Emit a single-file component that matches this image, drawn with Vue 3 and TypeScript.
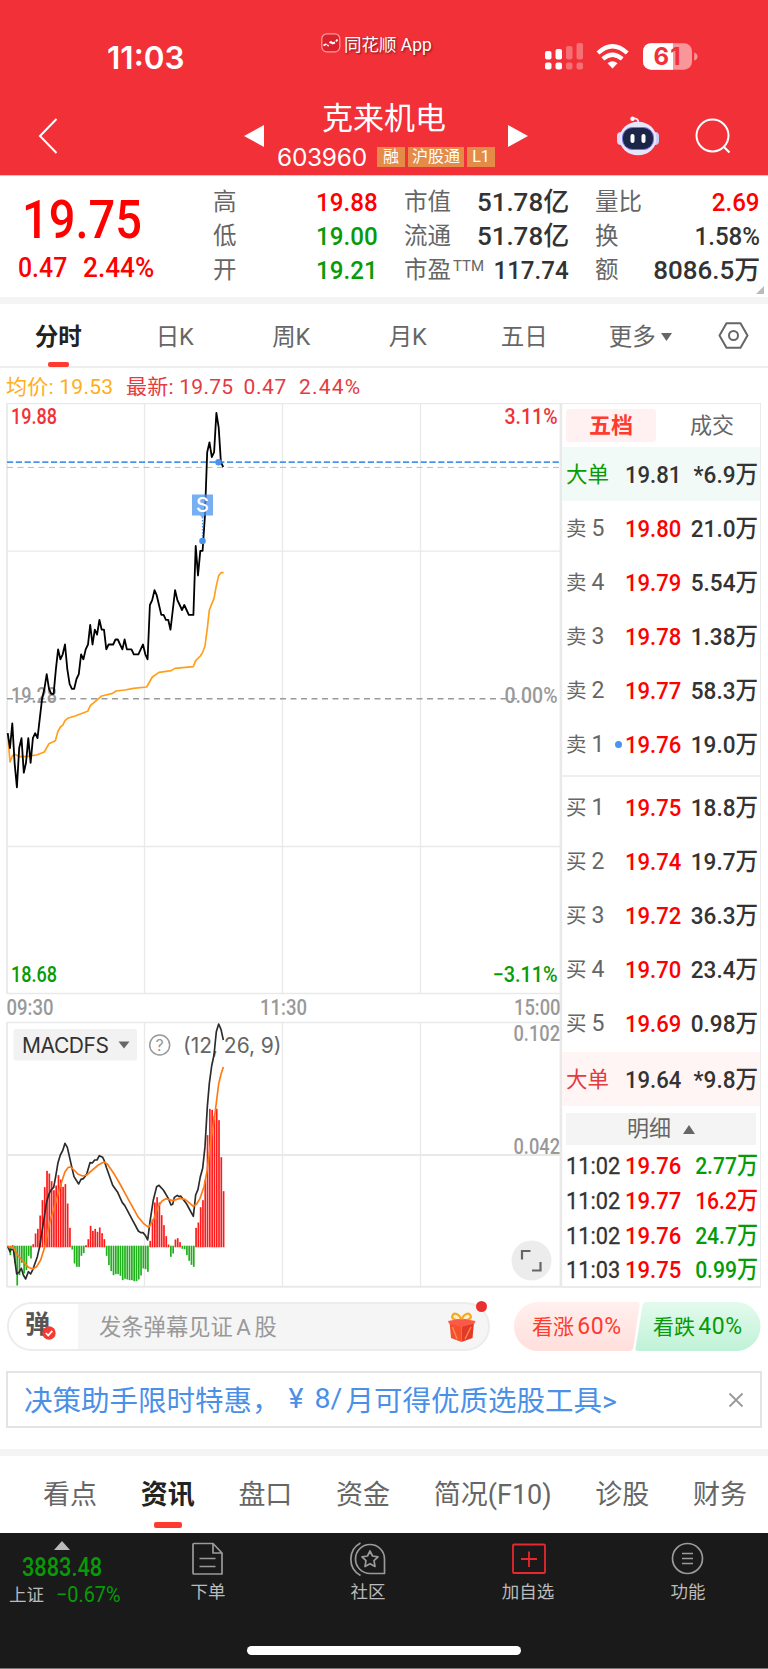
<script setup lang="ts">
interface Quote { label: string; sup?: string; value: string; tone: string; unit?: boolean }
interface Level { label: string; price: string; volume: string; dot?: boolean }
interface AxisLabel { text: string; x: number; y: number; width: number; tone: string }

const quoteColumns: Quote[][] = [
  [
    { label: '高', value: '19.88', tone: 'up' },
    { label: '低', value: '19.00', tone: 'down' },
    { label: '开', value: '19.21', tone: 'down' },
  ],
  [
    { label: '市值', value: '51.78亿', tone: 'flat', unit: true },
    { label: '流通', value: '51.78亿', tone: 'flat', unit: true },
    { label: '市盈', sup: 'TTM', value: '117.74', tone: 'flat' },
  ],
  [
    { label: '量比', value: '2.69', tone: 'up' },
    { label: '换', value: '1.58%', tone: 'flat' },
    { label: '额', value: '8086.5万', tone: 'flat', unit: true },
  ],
]

const periods = ['分时', '日K', '周K', '月K', '五日']

const axisLabels: AxisLabel[] = [
  { text: '19.88', x: 11, y: 423.5, width: 46, tone: 'up' },
  { text: '3.11%', x: 504.5, y: 423.5, width: 53, tone: 'up' },
  { text: '19.28', x: 11, y: 702.5, width: 46, tone: 'mid' },
  { text: '0.00%', x: 504.5, y: 702.5, width: 53, tone: 'mid' },
  { text: '18.68', x: 11, y: 981.5, width: 46, tone: 'down' },
  { text: '−3.11%', x: 492.5, y: 981.5, width: 65, tone: 'down' },
  { text: '09:30', x: 6.5, y: 1014.5, width: 47, tone: 'time' },
  { text: '11:30', x: 260, y: 1014.5, width: 47, tone: 'time' },
  { text: '15:00', x: 514, y: 1014.5, width: 46.5, tone: 'time' },
  { text: '0.102', x: 513.5, y: 1040.5, width: 46.5, tone: 'time' },
  { text: '0.042', x: 513.5, y: 1153.5, width: 46.5, tone: 'time' },
]

const sells: Level[] = [
  { label: '5', price: '19.80', volume: '21.0万' },
  { label: '4', price: '19.79', volume: '5.54万' },
  { label: '3', price: '19.78', volume: '1.38万' },
  { label: '2', price: '19.77', volume: '58.3万' },
  { label: '1', price: '19.76', volume: '19.0万', dot: true },
]
const buys: Level[] = [
  { label: '1', price: '19.75', volume: '18.8万' },
  { label: '2', price: '19.74', volume: '19.7万' },
  { label: '3', price: '19.72', volume: '36.3万' },
  { label: '4', price: '19.70', volume: '23.4万' },
  { label: '5', price: '19.69', volume: '0.98万' },
]
const deals = [
  { time: '11:02', price: '19.76', volume: '2.77万', tone: 'down' },
  { time: '11:02', price: '19.77', volume: '16.2万', tone: 'up' },
  { time: '11:02', price: '19.76', volume: '24.7万', tone: 'down' },
  { time: '11:03', price: '19.75', volume: '0.99万', tone: 'down' },
]
const sections = ['看点', '资讯', '盘口', '资金', '简况(F10)', '诊股', '财务']

/* Minute prices, in cents above the previous close of 19.28 */
const prices = [
  -7, -10, -5, -13, -18, -10, -8, -15, -13, -8, -13, -8, -7, -8, -4, 0, 2, 5, 2, 1,
  1, 6, 10, 8, 9, 11, 6, 3, 2, 2, 4, 5, 9, 8, 10, 11, 15, 11, 14, 13,
  16, 14, 14, 10, 11, 11, 11, 12, 12, 11, 10, 12, 10, 10, 10, 9, 9, 9, 10, 11,
  9, 8, 19, 20, 22, 21, 19, 17, 17, 16, 16, 14, 18, 22, 20, 19, 18, 19, 18, 17,
  17, 17, 31, 25, 30, 30, 37, 50, 52, 49, 50, 58, 55, 48, 47,
]
const minuteX = (i: number): number => 7.7 + i * 2.293
const priceLine = prices.map((p, i) => `${minuteX(i).toFixed(1)},${(698.7 - p * 4.93).toFixed(1)}`).join(' ')

/* MACD histogram, in thirds of a pixel, positive upwards */
const histogram = [
  0, -26, 4, -49, -117, -86, -49, -81, -71, -28, -36, 7, 39, 53, 93, 139, 178, 227, 219, 196,
  169, 183, 214, 201, 179, 187, 129, 56, -9, -51, -61, -61, -28, -20, 4, 22, 62, 47, 53, 44,
  57, 40, 22, -28, -56, -74, -86, -83, -83, -88, -101, -97, -99, -101, -101, -104, -104, -99, -87, -66,
  -68, -76, 17, 81, 132, 148, 132, 94, 64, 31, 6, -31, -21, 21, 25, 13, -7, -8, -26, -43,
  -55, -61, 56, 72, 118, 139, 199, 334, 413, 410, 391, 413, 379, 268, 166,
]
const bars = histogram.map((h, i) => ({
  x: minuteX(i) - 0.5,
  y: h > 0 ? 1246.5 - h / 3 : 1245.7,
  h: Math.abs(h) / 3 + 0.8,
  up: h > 0,
}))

const averageLine = '23,1000 30,1086 37,1068 44,1063 60,1070 80,1070 95,1067 110,1065 133,1056 147,1031 166,1022 174,994 181,981 188,976 195,962 203,955 225,948 263,934 271,917 305,888 338,880 348,873 375,870 400,865 440,861 457,831 477,817 514,812 525,805 580,800 587,782 601,768 608,757 615,738 622,685 628,630 642,595 649,557 656,527 663,518 671,518'
const difLine = '23,859 30,875 33,868 40,868 50,942 57,937 64,925 70,945 77,957 85,935 92,942 98,930 112,890 119,860 126,815 133,770 140,725 147,702 153,690 161,682 167,650 174,608 181,585 188,572 195,550 202,562 215,620 222,650 236,672 243,658 250,656 260,643 270,608 277,609 284,600 291,600 298,587 308,592 312,600 319,622 338,676 353,697 367,728 374,736 400,785 415,813 422,818 429,818 436,826 443,840 450,785 460,720 470,680 477,676 490,690 505,715 513,735 518,733 523,712 532,706 537,710 542,708 560,732 580,769 587,705 594,688 601,650 608,625 615,560 622,440 628,370 635,318 642,285 649,215 656,192 663,208 670,240'
const deaLine = '23,860 40,862 50,882 70,905 85,922 98,927 110,920 122,900 133,865 150,785 165,735 180,680 195,635 205,622 212,621 222,630 235,643 248,648 260,645 275,632 295,615 312,606 322,612 340,638 360,672 385,718 415,772 430,790 446,802 460,780 475,738 487,722 498,716 518,722 540,715 555,718 570,730 580,739 590,732 600,715 612,680 622,628 632,545 645,460 656,372 663,343 670,321'
</script>

<template>
  <div class="page">
    <header class="top">
      <div class="status">
        <span class="clock">11:03</span>
        <span class="brand">
          <svg width="20" height="20" viewBox="0 0 20 20">
            <rect x="0.8" y="0.8" width="18" height="18" rx="5" fill="#d9222b" stroke="#ff9a9e" stroke-width="1.2" />
            <path d="M2.5 12.5l3-1.5M6.500 13l1-1M8.500 10l1.500-1 1.500 1.500 2.500-1M15 8.500l1.500-2" fill="none" stroke="#fff" stroke-width="1.9" />
          </svg>
          <span>同花顺 App</span>
        </span>
        <svg class="signals" width="153" height="28" viewBox="545 43 153 28">
          <g fill="#fff">
            <rect x="545" y="51" width="6.500" height="8.500" rx="2" />
            <rect x="555.5" y="49" width="6.500" height="10.500" rx="2" />
            <rect x="545" y="62.500" width="6.500" height="7" rx="2" />
            <rect x="555.5" y="62.500" width="6.500" height="7" rx="2" />
            <g opacity=".3">
              <rect x="566" y="46" width="6.500" height="13.500" rx="2" />
              <rect x="576.5" y="43" width="6.500" height="16.500" rx="2" />
              <rect x="566" y="62.500" width="6.500" height="7" rx="2" />
              <rect x="576.5" y="62.500" width="6.500" height="7" rx="2" />
            </g>
            <path d="M612.500 68.500L607.500 63.200Q612.500 59.500 617.500 63.200Z" />
            <path d="M602.800 58.800Q612.500 50.500 622.200 58.800M598 53Q612.500 39.500 627.200 53" fill="none" stroke="#fff" stroke-width="4.300" />
            <rect x="643" y="43.200" width="49" height="26.500" rx="8" fill="#f9969a" />
            <path d="M651 43.200H673V69.700H651A8 8 0 0 1 643 61.700V51.200A8 8 0 0 1 651 43.200Z" />
            <path d="M694.200 52.500Q697.500 53.500 697.500 56.500T694.200 60.500Z" fill="#f9969a" />
          </g>
          <text x="653.500" y="64.500" textLength="27" class="battery">61</text>
        </svg>
      </div>
      <div class="titlebar">
        <svg class="back" width="20" height="36" viewBox="0 0 20 36"><path d="M18.500 1L2 18L18.500 35" fill="none" stroke="#fff" stroke-width="2" /></svg>
        <svg class="prev" width="20" height="22" viewBox="0 0 20 22"><path d="M0 11L20 0V22Z" fill="#fff" /></svg>
        <div class="name">
          <h1>克来机电</h1>
          <div class="code"><span class="num">603960</span><i>融</i><i>沪股通</i><i>L1</i></div>
        </div>
        <svg class="next" width="20" height="22" viewBox="0 0 20 22"><path d="M20 11L0 0V22Z" fill="#fff" /></svg>
        <svg class="robot" width="42" height="40" viewBox="0 0 42 40">
          <path d="M21 7C22 3.500 19.500 2 15 2.500" fill="none" stroke="#e9e8fb" stroke-width="1.800" />
          <circle cx="15.500" cy="2.800" r="2.200" fill="#fff" />
          <rect x="0" y="16" width="8" height="13" rx="4" fill="#d9d9f6" />
          <rect x="34" y="16" width="8" height="13" rx="4" fill="#c9cbf4" />
          <ellipse cx="21" cy="22.500" rx="18.500" ry="16.800" fill="#e6e6fa" />
          <rect x="5.500" y="11.500" width="31" height="22" rx="10" fill="#1b2547" stroke="#7b6fe8" stroke-width="1" />
          <rect x="13.500" y="18" width="4" height="9" rx="2" fill="#fff" />
          <rect x="24.500" y="18" width="4" height="9" rx="2" fill="#fff" />
        </svg>
        <svg class="search" width="36" height="36" viewBox="0 0 36 36"><circle cx="17.500" cy="17.500" r="16" fill="none" stroke="#fff" stroke-width="2" /><path d="M28.500 28.500L34.500 34.500" stroke="#fff" stroke-width="2.200" /></svg>
      </div>
    </header>

    <section class="quote">
      <div class="last">
        <strong>19.75</strong>
        <div><span>0.47</span><span class="pct">2.44%</span></div>
      </div>
      <div v-for="(col, c) in quoteColumns" :key="c" class="stats">
        <div v-for="q in col" :key="q.label">
          <label>{{ q.label }}<sup v-if="q.sup">{{ q.sup }}</sup></label>
          <b :class="[q.tone, { unit: q.unit }]">{{ q.value }}</b>
        </div>
      </div>
      <i class="corner"></i>
    </section>

    <nav class="periods">
      <span v-for="(p, i) in periods" :key="p" :class="{ on: i === 0 }">{{ p }}</span>
      <span class="more">更多<svg width="12" height="8" viewBox="0 0 12 8"><path d="M0 0H11L5.500 8Z" fill="#666" /></svg></span>
      <svg class="hex" width="31" height="27" viewBox="0 0 31 27"><path d="M8.500 1.200H22.500L29.500 13.500L22.500 25.800H8.500L1.500 13.500Z" fill="none" stroke="#666" stroke-width="2" stroke-linejoin="round" /><circle cx="15.500" cy="13.500" r="4.500" fill="none" stroke="#666" stroke-width="2" /></svg>
    </nav>

    <div class="legend">
      <span class="avg">均价: 19.53</span><span class="latest">最新: 19.75</span><span class="diff">0.47</span><span class="rate">2.44%</span>
    </div>

    <main class="market">
      <svg class="chart" width="562" height="885" viewBox="0 403 562 885">
        <g stroke="#e9e9e9" stroke-width="1.300" fill="none">
          <path d="M7 403.700H560M7 551.200H560M7 846.500H560M7 993.500H560M7 1022.500H560" />
          <path d="M144.500 403V993M282.500 403V993M420.500 403V993M144.500 1022V1286M282.500 1022V1286M420.500 1022V1286" />
          <path d="M7 403V993.500M7 1022V1287" stroke-width="1.800" />
          <path d="M7 1155H560M7 1286.700H562" stroke-width="2" />
          <path d="M560.900 403V1287" stroke-width="2.600" />
        </g>
        <path d="M7 698.700H524" stroke="#9a9a9a" stroke-width="1.500" stroke-dasharray="6 4.500" />
        <path d="M7 467.400H560" stroke="#d8b48c" stroke-width="1" stroke-dasharray="6 4.500" />
        <path d="M7 462.200H560" stroke="#4a94ee" stroke-width="1.700" stroke-dasharray="6.200 2.600" />

        <text v-for="a in axisLabels" :key="a.text" :x="a.x" :y="a.y" :textLength="a.width" lengthAdjust="spacingAndGlyphs" :class="['axis', a.tone]">{{ a.text }}</text>

        <g transform="translate(0 400) scale(.33333)"><polyline :points="averageLine" fill="none" stroke="#ff9f1a" stroke-width="5" stroke-linejoin="round" /></g>
        <polyline :points="priceLine" fill="none" stroke="#000" stroke-width="1.800" stroke-linejoin="round" />
        <path d="M202.500 517V539" stroke="#4a94ee" stroke-width="1.300" stroke-dasharray="1.500 1.500" />
        <path d="M192 494.500H213V515.500H205L202.500 518L200 515.500H192Z" fill="#4a94ee" fill-opacity=".75" />
        <text x="202.500" y="512" text-anchor="middle" class="mark">S</text>
        <circle cx="202.500" cy="541" r="3.300" fill="#4a94ee" />
        <circle cx="218.500" cy="462.200" r="3.300" fill="#4a94ee" />

        <rect x="13.500" y="1029" width="123.500" height="31.500" rx="2" fill="#f2f2f2" />
        <text x="22" y="1052.500" textLength="87" class="indicator dark">MACDFS</text>
        <path d="M118.500 1041.500H129.500L124 1048.500Z" fill="#666" />
        <circle cx="159.700" cy="1045" r="10" fill="none" stroke="#999" stroke-width="1.500" />
        <text x="159.700" y="1051" text-anchor="middle" class="help">?</text>
        <text x="183" y="1052.500" textLength="98.500" class="indicator">(12, 26, 9)</text>

        <rect v-for="(b, i) in bars" :key="i" :x="b.x" :y="b.y" width="1.700" :height="b.h" :fill="b.up ? '#ff1b1b' : '#20b01c'" />
        <g transform="translate(0 960) scale(.33333)" fill="none" stroke-linejoin="round" stroke-width="5">
          <polyline :points="difLine" stroke="#2b2b2b" />
          <polyline :points="deaLine" stroke="#ff7a14" />
        </g>
        <circle cx="531.500" cy="1260.500" r="20" fill="#ececec" />
        <path d="M522 1259.500V1251H530.500M540.500 1262V1270.500H532" fill="none" stroke="#666" stroke-width="2.200" />
      </svg>

      <aside class="book">
        <div class="switch"><span class="on">五档</span><span>成交</span></div>
        <div class="level big sell"><label>大单</label><b>19.81</b><em>*6.9万</em></div>
        <div v-for="l in sells" :key="'s' + l.label" class="level">
          <label>卖 <u>{{ l.label }}</u></label><i v-if="l.dot"></i><b>{{ l.price }}</b><em>{{ l.volume }}</em>
        </div>
        <hr />
        <div v-for="l in buys" :key="'b' + l.label" class="level">
          <label>买 <u>{{ l.label }}</u></label><b>{{ l.price }}</b><em>{{ l.volume }}</em>
        </div>
        <div class="level big buy"><label>大单</label><b>19.64</b><em>*9.8万</em></div>
        <div class="detail">明细<svg width="12" height="9" viewBox="0 0 12 9"><path d="M6 0L12 9H0Z" fill="#666" /></svg></div>
        <div v-for="(d, i) in deals" :key="i" class="deal">
          <time>{{ d.time }}</time><b>{{ d.price }}</b><em :class="d.tone">{{ d.volume }}</em>
        </div>
      </aside>
    </main>

    <section class="talk">
      <div class="pill">
        <div class="tan">弹<svg width="14" height="14" viewBox="0 0 14 14"><circle cx="7" cy="7" r="6.700" fill="#f53a32" /><path d="M3.800 7L6.200 9.500L10.300 4.800" fill="none" stroke="#fff" stroke-width="1.800" /></svg></div>
        <span class="hint">发条弹幕见证 A 股</span>
        <svg class="gift" width="30" height="32" viewBox="0 0 30 32">
          <path d="M14.500 9C8 10 4 7.500 5.500 4.500S12 2 14.500 9ZM14.500 9C21 10 25 7.500 23.500 4.500S17 2 14.500 9Z" fill="#fff0c8" stroke="#f3a928" stroke-width="2.200" />
          <path d="M2.500 11L14.500 15V31L4 27Z" fill="#f5502e" />
          <path d="M27 11L14.500 15V31L25.500 27Z" fill="#e23a26" />
          <path d="M1 10L14.500 7.500L28.500 10L27.500 12.500L14.500 16L2 12.500Z" fill="#fb5a48" />
          <path d="M11.500 8.500Q14.500 5 17.500 8.500Z" fill="#f3a928" />
          <path d="M5.500 16L10 28M24 16L18 28" stroke="#ff8c57" stroke-width="1.300" />
        </svg>
        <i class="unread"></i>
      </div>
      <div class="vote">
        <svg width="247" height="49" viewBox="0 0 247 49">
          <defs>
            <linearGradient id="rise" x1="0" y1="0" x2="0" y2="1"><stop offset="0" stop-color="#fff0ee" /><stop offset="1" stop-color="#ffdfdc" /></linearGradient>
            <linearGradient id="fall" x1="0" y1="0" x2="0" y2="1"><stop offset="0" stop-color="#e3faed" /><stop offset="1" stop-color="#c0f2d7" /></linearGradient>
          </defs>
          <path d="M24.500 0H123Q126 0 125.500 3L119.500 45Q119 49 115 49H24.500A24.500 24.500 0 0 1 24.500 0Z" fill="url(#rise)" />
          <path d="M222 0H133Q129 0 128.500 4L121.500 46Q121 49 124 49H222A24.500 24.500 0 0 0 222 0Z" fill="url(#fall)" />
        </svg>
        <span class="rise">看涨 <u>60%</u></span><span class="fall">看跌 <u>40%</u></span>
      </div>
    </section>

    <section class="promo">
      <span>决策助手限时特惠，</span><span class="yen">¥</span><span class="amount">8/</span><span>月可得优质选股工具&gt;</span>
      <svg width="14" height="14" viewBox="0 0 14 14"><path d="M0.500 0.500L13.500 13.500M13.500 0.500L0.500 13.500" stroke="#999" stroke-width="1.800" /></svg>
    </section>

    <nav class="sections">
      <span v-for="s in sections" :key="s" :class="{ on: s === '资讯' }">{{ s }}</span>
    </nav>

    <footer class="dock">
      <div class="index">
        <svg width="16" height="9" viewBox="0 0 16 9"><path d="M8 0L16 9H0Z" fill="#bbb" /></svg>
        <b>3883.48</b>
        <div><span>上证</span><em>−0.67%</em></div>
      </div>
      <div class="item">
        <svg width="36" height="34" viewBox="0 0 36 34" fill="none" stroke="#9a9a9a" stroke-width="1.700" stroke-linejoin="round"><path d="M4 1.500H23L32 11V32H4Q3 32 3 31V2.500Q3 1.500 4 1.500ZM23 1.500V11H32M9.500 16.500H25.500M9.500 24.500H25.500" /></svg>
        <span>下单</span>
      </div>
      <div class="item">
        <svg width="36" height="34" viewBox="0 0 36 34" fill="none" stroke="#9a9a9a" stroke-width="1.700" stroke-linejoin="round"><path d="M20 2.500A14.500 14.500 0 1 0 20 31.500H34.500V17A14.500 14.500 0 0 0 20 2.500Z" /><path d="M10.500 1A18.500 18.500 0 0 0 10.500 33.500" /><path d="M20 9L22.500 14L28 14.800L24 18.700L25 24.500L20 21.800L15 24.500L16 18.700L12 14.800L17.500 14Z" /></svg>
        <span>社区</span>
      </div>
      <div class="item">
        <svg width="36" height="34" viewBox="0 0 36 34" fill="none" stroke="#e8282d" stroke-width="1.800"><rect x="3" y="2.500" width="32" height="28.500" rx="1" /><path d="M11 17H27M19 9.500V25" /></svg>
        <span>加自选</span>
      </div>
      <div class="item">
        <svg width="36" height="34" viewBox="0 0 36 34" fill="none" stroke="#9a9a9a" stroke-width="1.700"><circle cx="17.500" cy="16.500" r="15" /><path d="M12 11.500H23M12 16.500H23M12 21.500H23" /></svg>
        <span>功能</span>
      </div>
      <i class="home"></i>
    </footer>
  </div>
</template>

<style>
body { background: #fff; }
</style>

<style scoped>
.page { width: 768px; height: 1669px; overflow: hidden; background: #fff; font-family: Roboto, "Noto Sans CJK SC", sans-serif; color: #333; display: flex; flex-direction: column; }
.page * { box-sizing: border-box; white-space: nowrap; }
svg { display: block; flex: none; overflow: visible; }
i, em { font-style: normal; }
u { text-decoration: none; }
.up { color: #ff0000; fill: #ef3338; }
.down { color: #079b07; fill: #079b07; }
.flat { color: #333; }

.top { height: 176px; flex: none; background: #f23038; border-bottom: 1px solid #ffb9bc; color: #fff; }
.status { height: 100px; display: flex; align-items: flex-start; }
.clock { margin: 39px 0 0 107px; width: 214px; font: 600 31.500px/38px Inter, sans-serif; letter-spacing: 0; }
.brand { display: flex; gap: 3px; margin-top: 33px; width: 224px; font-size: 17.500px; line-height: 24px; text-shadow: 1px 1px 2px #7c1014; }
.signals { margin-top: 43px; }
.battery { font: 700 24px Inter, sans-serif; fill: #f23038; }
.titlebar { display: flex; align-items: flex-start; height: 75px; }
.back { margin: 18px 0 0 38px; }
.prev { margin: 25px 0 0 186px; }
.name { width: 244px; display: flex; flex-direction: column; align-items: center; }
h1 { margin: 1px 4px 0 0; font-weight: 400; font-size: 31px; line-height: 36px; }
.code { display: flex; align-items: center; gap: 3px; height: 24px; margin-top: 8px; }
.code .num { font: 400 24.500px/24px Inter, sans-serif; width: 97px; letter-spacing: -0.300px; margin-top: -1px; }
.code i { background: #e38b47; height: 20px; line-height: 20px; font-size: 16px; padding: 0 4px; min-width: 28px; text-align: center; }
.next { margin-top: 25px; }
.robot { margin: 16px 0 0 89px; }
.search { margin: 18px 0 0 36px; }

.quote { height: 128px; flex: none; border-bottom: 7px solid #f4f4f4; position: relative; display: flex; }
.last { width: 213px; color: #ff0000; font-weight: 500; }
.last strong { display: block; font-weight: 500; font-size: 54px; line-height: 60px; margin: 14px 0 0 22px; transform: scaleX(.87); transform-origin: left; }
.last div { display: flex; font-size: 27px; line-height: 32px; margin: 2px 0 0 18px; }
.last span { width: 65px; transform: scaleX(.92); transform-origin: left; }
.last .pct { transform: scaleX(.97); }
.stats { width: 165px; margin-right: 26px; padding-top: 9px; }
.stats + .stats + .stats { margin-right: 0; }
.stats div { display: flex; justify-content: space-between; height: 34px; line-height: 35px; }
.stats label { font-size: 23.500px; color: #666; }
.stats sup { font-size: 15px; line-height: 1; margin-left: 2px; vertical-align: 7px; }
.stats b { font-size: 26.500px; font-weight: 500; transform: scaleX(.91); transform-origin: right; margin-left: -30px; line-height: 34px; }
.stats .unit { transform: scaleX(.98); }
.corner { position: absolute; right: 4px; bottom: 3px; width: 8px; height: 8px; background: #bbb; clip-path: polygon(100% 0, 100% 100%, 0 100%); }

.periods { height: 64px; flex: none; border-bottom: 2px solid #eee; display: grid; grid-template-columns: repeat(6, 116.500px) 1fr; justify-items: center; color: #666; font-size: 23.500px; line-height: 66px; }
.periods span { display: flex; align-items: center; height: 62px; padding-top: 3px; position: relative; }
.periods .on { color: #222; font-weight: 700; }
.periods .on::after { content: ""; position: absolute; left: 50%; bottom: -1px; width: 21px; height: 5px; margin-left: -10.500px; border-radius: 2px; background: #ff3b30; }
.more svg { margin-left: 5px; }
.hex { margin-top: 18px; }
.legend { height: 35px; flex: none; display: flex; padding-left: 6px; font-size: 21px; line-height: 38px; letter-spacing: .25px; color: #e53a3e; }
.avg { color: #ffae1a; width: 120px; }
.latest { width: 117.500px; }
.diff { width: 55.500px; letter-spacing: .6px; }
.rate { letter-spacing: 1.200px; }

.market { display: flex; height: 885px; flex: none; }
.axis { font: 500 21.500px Roboto, sans-serif; }
.mid, .time { fill: #999; }
.mark { font: 500 20px Inter, sans-serif; fill: #fff; }
.indicator { font: 400 21px Inter, sans-serif; fill: #666; }
.dark { fill: #333; }
.help { font: 400 16px Inter, sans-serif; fill: #999; }
.book { width: 199px; border-top: 1px solid #eaeaea; border-right: 1.500px solid #eaeaea; border-bottom: 2px solid #eaeaea; }
.switch { height: 43px; padding: 5px 0 0 4px; display: flex; font-size: 22px; line-height: 33px; color: #666; text-align: center; }
.switch span { width: 90px; height: 33px; }
.switch span + span { margin-left: 11px; }
.switch .on { background: #fff1f1; color: #ff3b30; font-weight: 700; border-radius: 3px; }
.level, .deal { height: 54px; line-height: 55px; display: flex; position: relative; padding: 0 2px 0 4px; font-size: 24.500px; }
.level label { width: 59px; font-size: 20.500px; color: #666; }
.level u { font-size: 23px; }
.level b, .deal b { width: 60px; font-weight: 500; color: #ff0000; transform: scaleX(.9); transform-origin: left; }
.level em, .deal em { flex: 1; font-weight: 500; text-align: right; transform: scaleX(.92); transform-origin: right; margin-left: -20px; }
.deal em { transform: scaleX(.86); }
.level i { position: absolute; left: 53px; top: 24px; width: 7px; height: 7px; border-radius: 50%; background: #4a94ee; }
.big b { color: #333; }
.sell { background: #f1faf6; }
.buy { background: #fff5f5; margin-top: 2px; }
.level.big label { font-size: 21.500px; }
.sell label { color: #079b07; }
.buy label { color: #e53a3e; }
hr { border: 0; border-top: 2px solid #eee; height: 9px; margin: 4px 0 -4px; }
.detail { height: 32px; margin: 7px 4px 4px; background: #f4f4f4; color: #666; font-size: 22px; line-height: 32px; display: flex; justify-content: center; align-items: center; gap: 12px; }
.deal { height: 34.800px; line-height: 34px; }
.deal time { width: 59px; font-weight: 400; transform: scaleX(.89); transform-origin: left; -webkit-text-stroke: .3px; }

.talk { height: 49px; flex: none; margin-top: 14px; display: flex; justify-content: space-between; padding: 0 7px; }
.pill { position: relative; width: 483px; height: 49px; display: flex; align-items: center; background: #f5f5f5; border: 2px solid #ececec; border-radius: 25px; }
.tan { width: 69px; height: 45px; background: #fff; border-radius: 23px 0 0 23px; font-weight: 700; font-size: 25px; line-height: 41px; color: #555; padding-left: 16px; position: relative; }
.tan svg { position: absolute; left: 33px; top: 22px; }
.hint { margin: -3px 0 0 21px; width: 348px; font-size: 22.300px; word-spacing: -2px; color: #999; }
.unread { position: absolute; right: 1px; top: -3px; width: 11px; height: 11px; border-radius: 50%; background: #e93030; }
.vote { position: relative; width: 247px; display: flex; font-size: 21px; line-height: 49px; word-spacing: -2px; }
.vote svg { position: absolute; right: 0; top: 0; }
.vote span { position: relative; }
.vote u { font-size: 23px; letter-spacing: .6px; }
.rise { margin-left: 18px; width: 121px; color: #ff3b30; }
.fall { color: #079b07; }

.promo { height: 57px; flex: none; margin: 20px 6px 0; border: 2px solid #e4e4e4; display: flex; align-items: center; padding: 0 0 2px 16px; font-size: 28.500px; color: #4a90e8; }
.yen { width: 26px; margin-left: 8px; }
.amount { width: 31px; }
.promo svg { margin: 2px 17px 0 auto; }

.sections { height: 84px; flex: none; margin-top: 21px; border-top: 7px solid #f4f4f4; padding-left: 43px; display: flex; gap: 43.700px; font-size: 27px; line-height: 78px; color: #666; }
.sections span { position: relative; }
.sections .on { color: #222; font-weight: 700; }
.sections .on::after { content: ""; position: absolute; left: 50%; top: 66px; width: 28px; height: 6px; margin-left: -14px; border-radius: 2px; background: #ff3b30; }

.dock { position: relative; flex: 1; background: #1a1a1a; display: flex; color: #bbb; font-size: 17.500px; border-bottom: 1px solid #777; }
.index { width: 128px; padding-top: 8px; }
.index svg { margin-left: 54px; }
.index b { display: block; margin: 5px 0 0 22px; font-weight: 500; font-size: 25px; line-height: 26px; color: #079b07; transform: scaleX(.87); transform-origin: left; }
.index div { display: flex; padding-left: 9px; line-height: 26px; margin-top: 1px; }
.index span { width: 48px; }
.index em { font-size: 22px; color: #079b07; transform: scaleX(.9); transform-origin: left; }
.item { width: 160px; display: flex; flex-direction: column; align-items: center; padding-top: 9px; line-height: 24px; gap: 4px; }
.home { position: absolute; left: 247px; bottom: 13px; width: 274px; height: 9px; border-radius: 5px; background: #fff; }
</style>
